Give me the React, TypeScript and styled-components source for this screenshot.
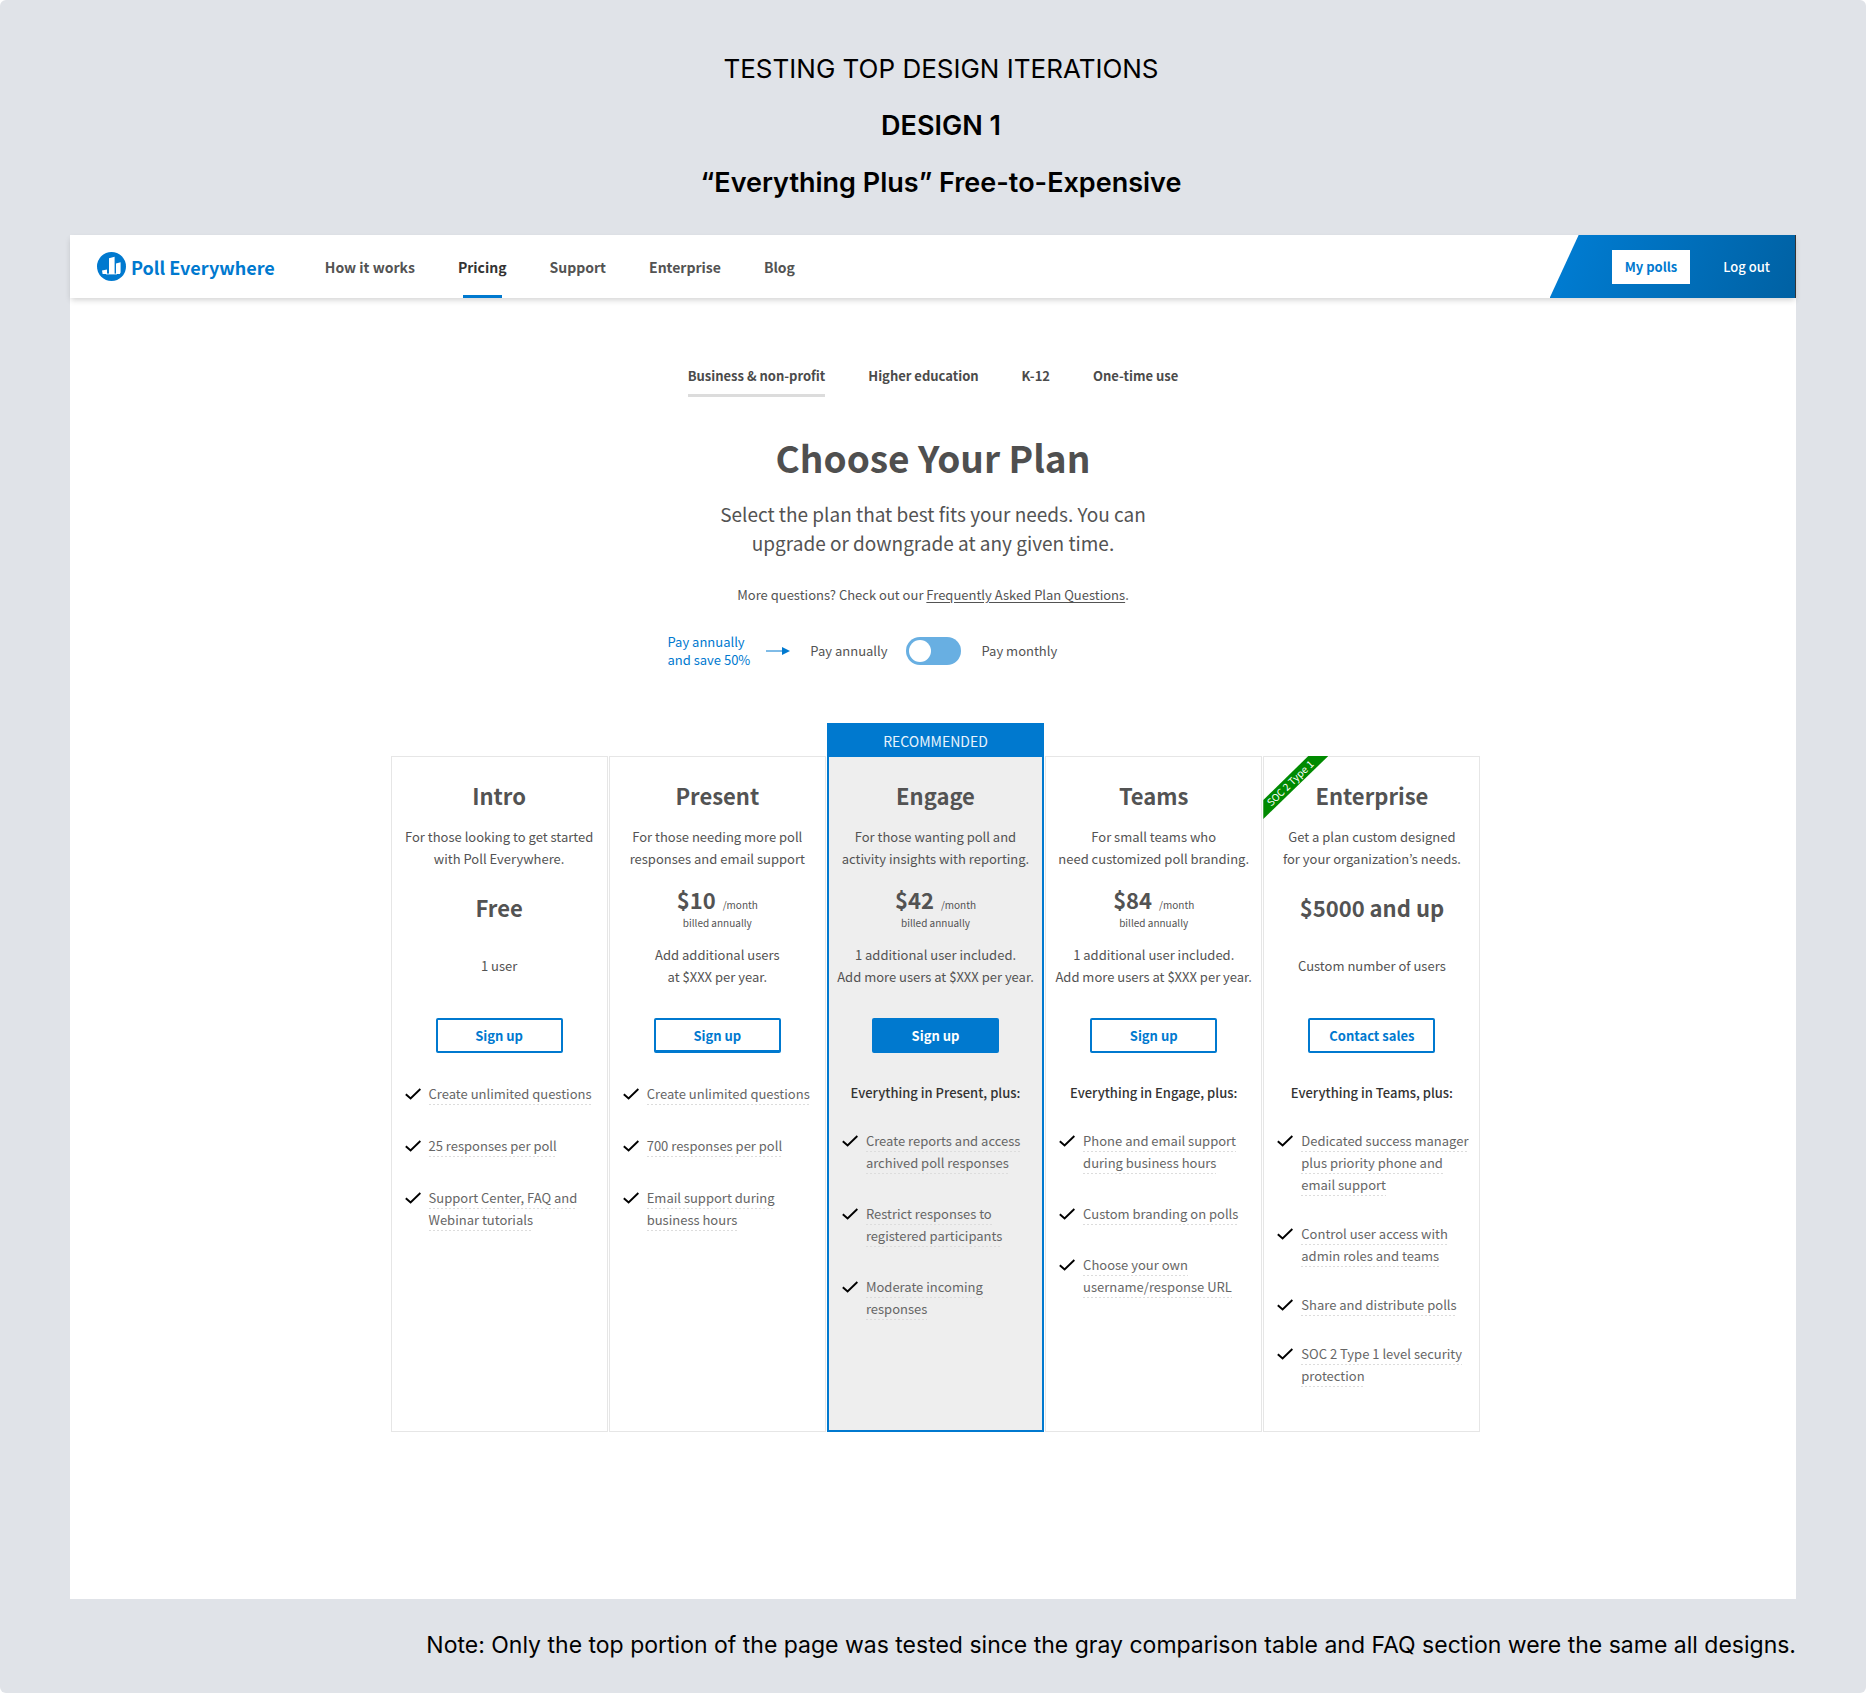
import React, { useState } from "react";
import styled, { createGlobalStyle, css } from "styled-components";

const blue = "#0079cf";
const ink = "#535353";
const display = `Inter, "Liberation Sans", sans-serif`;
const body = `"Noto Sans CJK KR", "Noto Sans", sans-serif`;

const GlobalStyle = createGlobalStyle`
  *, *::before, *::after { box-sizing: border-box; }
  body { margin: 0; background: #fff; font-family: ${body}; color: ${ink}; }
  h1, h2, h3, p, ul { margin: 0; padding: 0; }
  button { font: inherit; cursor: pointer; }
`;

const Board = styled.div`
  min-height: 100vh;
  padding: 40px 70px 28px;
  background: #e0e3e8;
  border-radius: 6px;
`;

const BoardHeader = styled.header`
  padding: 0 0 24px 16px;
  text-align: center;
  color: #000;
  font-family: ${display};
`;

const BoardLine = styled.p<{ $strong?: boolean }>`
  font-size: ${(p) => (p.$strong ? 27 : 26)}px;
  line-height: 57px;
  font-weight: ${(p) => (p.$strong ? 600 : 400)};
`;

const Note = styled.p`
  padding-top: 27px;
  font: 400 23px/38px ${display};
  color: #000;
  text-align: right;
`;

const Sheet = styled.div`
  background: #fff;
`;

const TopBar = styled.div`
  display: flex;
  align-items: stretch;
  height: 63px;
  padding-left: 27px;
  box-shadow: 0 3px 6px -1px rgba(0, 0, 0, 0.18);
`;

const Brand = styled.a`
  display: flex;
  align-items: center;
  gap: 5px;
  margin-right: 50px;
  color: ${blue};
  font-size: 18px;
  font-weight: 700;
  text-decoration: none;
`;

const Nav = styled.nav`
  display: flex;
  gap: 43px;
`;

const NavLink = styled.a<{ $active?: boolean }>`
  position: relative;
  display: flex;
  align-items: center;
  font-size: 14px;
  font-weight: 600;
  color: ${(p) => (p.$active ? "#333" : ink)};
  text-decoration: none;
  ${(p) =>
    p.$active &&
    css`
      &::after {
        content: "";
        position: absolute;
        bottom: 0;
        left: 5px;
        right: 5px;
        height: 3px;
        background: ${blue};
      }
    `}
`;

const Account = styled.div`
  display: flex;
  align-items: center;
  gap: 33px;
  margin-left: auto;
  padding: 0 25px 0 62px;
  border-right: 1px solid #333;
  background: linear-gradient(110deg, #007bd0 10%, #0061a3 100%);
  clip-path: polygon(29px 0, 100% 0, 100% 100%, 0 100%);
`;

const AccountButton = styled.button<{ $solid?: boolean }>`
  height: 34px;
  padding: 0 ${(p) => (p.$solid ? 13 : 0)}px;
  border: 0;
  background: ${(p) => (p.$solid ? "#fff" : "transparent")};
  color: ${(p) => (p.$solid ? blue : "#fff")};
  font-size: 13px;
  font-weight: ${(p) => (p.$solid ? 600 : 500)};
`;

const Main = styled.main`
  display: flex;
  flex-direction: column;
  align-items: center;
  padding: 67px 0 167px;
`;

const Tabs = styled.div`
  display: flex;
  gap: 43px;
`;

const Tab = styled.button<{ $active: boolean }>`
  padding: 0 0 7px;
  border: 0;
  border-bottom: 3px solid ${(p) => (p.$active ? "#dcdcdc" : "transparent")};
  background: none;
  color: #4b4b4b;
  font-size: 13px;
  line-height: 22px;
  font-weight: 700;
`;

const Title = styled.h1`
  margin-top: 36px;
  font-size: 37px;
  line-height: 48px;
  font-weight: 700;
  color: #4f4f4f;
`;

const Lead = styled.p`
  margin-top: 18px;
  font-size: 19px;
  line-height: 29px;
  text-align: center;
`;

const Faq = styled.p`
  margin-top: 27px;
  font-size: 13px;
  line-height: 22px;
  a { color: inherit; text-underline-offset: 2px; }
`;

const Billing = styled.div`
  display: grid;
  grid-template-columns: 1fr auto 1fr;
  align-items: center;
  gap: 18px;
  width: 100%;
  margin-top: 27px;
  font-size: 13px;
  line-height: 18px;
`;

const BillingHint = styled.div`
  display: flex;
  align-items: center;
  justify-content: flex-end;
  gap: 20px;
`;

const Saving = styled.p`
  display: flex;
  align-items: center;
  gap: 16px;
  color: ${blue};
`;

const Toggle = styled.input`
  appearance: none;
  display: block;
  width: 55px;
  height: 28px;
  margin: 0;
  padding: 3px;
  border-radius: 14px;
  background: #68afe2;
  cursor: pointer;
  &::before {
    content: "";
    display: block;
    width: 22px;
    height: 22px;
    border-radius: 50%;
    background: #fff;
  }
  &:checked::before { margin-left: auto; }
`;

const ToggleLabel = styled.label`
  padding-left: 3px;
`;

const Plans = styled.section`
  display: grid;
  grid-template-columns: repeat(5, 1fr);
  gap: 1px;
  width: 100%;
  max-width: 1095px;
  margin-top: 54px;
  padding-left: 5px;
`;

const Card = styled.article<{ $featured?: boolean }>`
  position: relative;
  display: flex;
  flex-direction: column;
  align-items: center;
  margin-top: ${(p) => (p.$featured ? 0 : 33)}px;
  padding-bottom: 44px;
  border: ${(p) => (p.$featured ? `2px solid ${blue}` : "1px solid #e6e6e6")};
  background: ${(p) => (p.$featured ? "#eee" : "#fff")};
`;

const Banner = styled.p`
  align-self: stretch;
  height: 32px;
  background: ${blue};
  color: #e8f4fd;
  font-size: 14px;
  line-height: 32px;
  text-align: center;
`;

const Ribbon = styled.div`
  position: absolute;
  top: -1px;
  left: -1px;
  width: 65px;
  height: 63px;
  background: #008a00;
  clip-path: polygon(0 44px, 45px 0, 65px 0, 0 63px);
  span {
    position: absolute;
    top: 19px;
    left: -8px;
    width: 70px;
    color: #fff;
    font-size: 10px;
    line-height: 16px;
    text-align: center;
    white-space: nowrap;
    transform: rotate(-44deg);
  }
`;

const PlanName = styled.h2`
  margin-top: 22px;
  font-size: 22px;
  line-height: 32px;
  font-weight: 600;
`;

const Copy = styled.p<{ $top: number }>`
  display: flex;
  flex-direction: column;
  justify-content: center;
  min-height: 44px;
  margin-top: ${(p) => p.$top}px;
  font-size: 13px;
  line-height: 22px;
  text-align: center;
  white-space: pre;
`;

const PriceBlock = styled.div`
  display: flex;
  flex-direction: column;
  align-items: center;
  justify-content: center;
  min-height: 48px;
  margin-top: 13px;
  font-size: 10px;
  line-height: 16px;
`;

const PriceLine = styled.p`
  display: flex;
  align-items: baseline;
  gap: 7px;
`;

const Amount = styled.strong`
  font-size: 22px;
  line-height: 32px;
  font-weight: 600;
`;

const SignUp = styled.button<{ $solid?: boolean; $heavy?: boolean }>`
  width: 127px;
  height: 35px;
  margin: 30px 0 29px;
  padding: 0;
  border: 2px solid ${blue};
  border-bottom-width: ${(p) => (p.$heavy ? 3 : 2)}px;
  border-radius: 2px;
  background: ${(p) => (p.$solid ? blue : "#fff")};
  color: ${(p) => (p.$solid ? "#fff" : blue)};
  font-size: 13px;
  font-weight: 600;
`;

const Inherits = styled.h3`
  margin-bottom: 25px;
  font-size: 13px;
  line-height: 22px;
  font-weight: 500;
  color: #333;
`;

const Features = styled.ul<{ $gap: number }>`
  && { margin-top: 1px; }
  display: flex;
  flex-direction: column;
  align-self: stretch;
  gap: ${(p) => p.$gap}px;
  padding-left: 13px;
  list-style: none;
`;

const Feature = styled.li`
  display: flex;
  gap: 8px;
  color: #666;
  font-size: 13px;
  line-height: 22px;
  white-space: pre;
  svg { flex: none; margin-top: 5px; }
`;

const Dotted = styled.span`
  padding-bottom: 2px;
  background: repeat-x left bottom / 4px 1px linear-gradient(90deg, #dcdcdc 2px, transparent 2px);
  box-decoration-break: clone;
  -webkit-box-decoration-break: clone;
`;

const Logo = () => (
  <svg width="29" height="29" viewBox="0 0 29 29" aria-hidden="true">
    <circle cx="14.5" cy="14.5" r="14.5" fill={blue} />
    <path d="M5 18.6L10 17.4V22H5.6zM12 6.2L17.6 4.8V22H12zM19 11.4L23.6 10.2V20.4L22.8 22H19z" fill="#fff" />
    <path d="M9 22H20" stroke="#fff" strokeWidth="0.8" />
  </svg>
);

const Check = () => (
  <svg width="16" height="12" viewBox="0 0 16 12" fill="none" stroke="#000" strokeWidth="2" aria-hidden="true">
    <path d="M0.8 6.2L5.6 10.4L15.4 1" />
  </svg>
);

const Arrow = () => (
  <svg width="24" height="8" viewBox="0 0 24 8" aria-hidden="true">
    <path d="M0 4H17" stroke={blue} />
    <path d="M16 0L24 4L16 8z" fill={blue} />
  </svg>
);

type Plan = {
  name: string;
  blurb: string;
  price: string;
  monthly?: boolean;
  users: string;
  action: string;
  inherits?: string;
  gap: number;
  features: string[];
  featured?: boolean;
  heavy?: boolean;
  ribbon?: string;
};

const plans: Plan[] = [
  {
    name: "Intro",
    blurb: "For those looking to get started\nwith Poll Everywhere.",
    price: "Free",
    users: "1 user",
    action: "Sign up",
    gap: 30,
    features: ["Create unlimited questions", "25 responses per poll", "Support Center, FAQ and\nWebinar tutorials"],
  },
  {
    name: "Present",
    blurb: "For those needing more poll\nresponses and email support",
    price: "$10",
    monthly: true,
    users: "Add additional users\nat $XXX per year.",
    action: "Sign up",
    heavy: true,
    gap: 30,
    features: ["Create unlimited questions", "700 responses per poll", "Email support during\nbusiness hours"],
  },
  {
    name: "Engage",
    blurb: "For those wanting poll and\nactivity insights with reporting.",
    price: "$42",
    monthly: true,
    users: "1 additional user included.\nAdd more users at $XXX per year.",
    action: "Sign up",
    featured: true,
    inherits: "Everything in Present, plus:",
    gap: 29,
    features: [
      "Create reports and access\narchived poll responses",
      "Restrict responses to\nregistered participants",
      "Moderate incoming\nresponses",
    ],
  },
  {
    name: "Teams",
    blurb: "For small teams who\nneed customized poll branding.",
    price: "$84",
    monthly: true,
    users: "1 additional user included.\nAdd more users at $XXX per year.",
    action: "Sign up",
    inherits: "Everything in Engage, plus:",
    gap: 29,
    features: [
      "Phone and email support\nduring business hours",
      "Custom branding on polls",
      "Choose your own\nusername/response URL",
    ],
  },
  {
    name: "Enterprise",
    blurb: "Get a plan custom designed\nfor your organization’s needs.",
    price: "$5000 and up",
    users: "Custom number of users",
    action: "Contact sales",
    ribbon: "SOC 2 Type 1",
    inherits: "Everything in Teams, plus:",
    gap: 27,
    features: [
      "Dedicated success manager\nplus priority phone and\nemail support",
      "Control user access with\nadmin roles and teams",
      "Share and distribute polls",
      "SOC 2 Type 1 level security\nprotection",
    ],
  },
];

const navItems = ["How it works", "Pricing", "Support", "Enterprise", "Blog"];
const audiences = ["Business & non-profit", "Higher education", "K-12", "One-time use"];

const PlanCard = ({ plan }: { plan: Plan }) => (
  <Card $featured={plan.featured}>
    {plan.featured && <Banner>RECOMMENDED</Banner>}
    {plan.ribbon && (
      <Ribbon>
        <span>{plan.ribbon}</span>
      </Ribbon>
    )}
    <PlanName>{plan.name}</PlanName>
    <Copy $top={15}>{plan.blurb}</Copy>
    <PriceBlock>
      <PriceLine>
        <Amount>{plan.price}</Amount>
        {plan.monthly && <span>/month</span>}
      </PriceLine>
      {plan.monthly && <p>billed annually</p>}
    </PriceBlock>
    <Copy $top={13}>{plan.users}</Copy>
    <SignUp $solid={plan.featured} $heavy={plan.heavy}>
      {plan.action}
    </SignUp>
    {plan.inherits && <Inherits>{plan.inherits}</Inherits>}
    <Features $gap={plan.gap}>
      {plan.features.map((text) => (
        <Feature key={text}>
          <Check />
          <div>
            <Dotted>{text}</Dotted>
          </div>
        </Feature>
      ))}
    </Features>
  </Card>
);

export default function App() {
  const [audience, setAudience] = useState(audiences[0]);
  const [monthly, setMonthly] = useState(false);

  return (
    <>
      <GlobalStyle />
      <Board>
        <BoardHeader>
          <BoardLine>TESTING TOP DESIGN ITERATIONS</BoardLine>
          <BoardLine $strong>DESIGN 1</BoardLine>
          <BoardLine $strong>“Everything Plus” Free-to-Expensive</BoardLine>
        </BoardHeader>
        <Sheet>
          <TopBar>
            <Brand href="#">
              <Logo />
              Poll Everywhere
            </Brand>
            <Nav>
              {navItems.map((item) => (
                <NavLink key={item} href="#" $active={item === "Pricing"}>
                  {item}
                </NavLink>
              ))}
            </Nav>
            <Account>
              <AccountButton $solid>My polls</AccountButton>
              <AccountButton>Log out</AccountButton>
            </Account>
          </TopBar>
          <Main>
            <Tabs>
              {audiences.map((item) => (
                <Tab key={item} $active={item === audience} onClick={() => setAudience(item)}>
                  {item}
                </Tab>
              ))}
            </Tabs>
            <Title>Choose Your Plan</Title>
            <Lead>
              Select the plan that best fits your needs. You can
              <br />
              upgrade or downgrade at any given time.
            </Lead>
            <Faq>
              More questions? Check out our <a href="#">Frequently Asked Plan Questions</a>.
            </Faq>
            <Billing>
              <BillingHint>
                <Saving>
                  <span>
                    Pay annually
                    <br />
                    and save 50%
                  </span>
                  <Arrow />
                </Saving>
                <span>Pay annually</span>
              </BillingHint>
              <Toggle
                id="billing"
                type="checkbox"
                role="switch"
                checked={monthly}
                onChange={(e) => setMonthly(e.target.checked)}
              />
              <ToggleLabel htmlFor="billing">Pay monthly</ToggleLabel>
            </Billing>
            <Plans>
              {plans.map((plan) => (
                <PlanCard key={plan.name} plan={plan} />
              ))}
            </Plans>
          </Main>
        </Sheet>
        <Note>
          Note: Only the top portion of the page was tested since the gray comparison table and FAQ section were the
          same all designs.
        </Note>
      </Board>
    </>
  );
}
